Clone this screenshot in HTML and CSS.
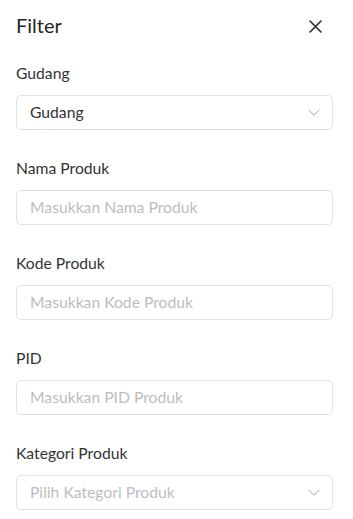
FILE: index.html
```html
<!DOCTYPE html>
<html lang="id">
<head>
<meta charset="utf-8">
<title>Filter</title>
<link rel="stylesheet" href="styles.css">
</head>
<body>
<div class="panel">
  <div class="header">
    <h1 class="title">Filter</h1>
    <button class="close" aria-label="Tutup">
      <svg width="13" height="13" viewBox="0 0 13 13"><path d="M1 1L12 12M12 1L1 12" stroke="#2b2b2b" stroke-width="1.6" stroke-linecap="round" fill="none"/></svg>
    </button>
  </div>
  <div class="fields">
    <div class="field">
      <label class="label">Gudang</label>
      <div class="control select">
        <span class="value">Gudang</span>
        <svg class="chev" width="12" height="7" viewBox="0 0 12 7"><path d="M0.5 0.8L6 6.2L11.5 0.8" stroke="#a6a6a6" stroke-width="1" fill="none"/></svg>
      </div>
    </div>
    <div class="field">
      <label class="label">Nama Produk</label>
      <div class="control"><span class="placeholder">Masukkan Nama Produk</span></div>
    </div>
    <div class="field">
      <label class="label">Kode Produk</label>
      <div class="control"><span class="placeholder">Masukkan Kode Produk</span></div>
    </div>
    <div class="field">
      <label class="label">PID</label>
      <div class="control"><span class="placeholder">Masukkan PID Produk</span></div>
    </div>
    <div class="field">
      <label class="label">Kategori Produk</label>
      <div class="control select">
        <span class="placeholder">Pilih Kategori Produk</span>
        <svg class="chev" width="12" height="7" viewBox="0 0 12 7"><path d="M0.5 0.8L6 6.2L11.5 0.8" stroke="#a6a6a6" stroke-width="1" fill="none"/></svg>
      </div>
    </div>
  </div>
</div>
</body>
</html>
```
FILE: styles.css
```css
* { box-sizing: border-box; }
html, body { margin: 0; background: #fff; }
body {
  font-family: Lato, "Open Sans", sans-serif;
  color: #333;
}
.panel {
  padding: 13px 20px 0 16px;
}
.header {
  display: flex;
  justify-content: space-between;
  align-items: center;
  height: 24px;
  padding-right: 11px;
}
.title {
  margin: 0;
  font-size: 20px;
  line-height: 24px;
  font-weight: 400;
  color: #262626;
}
.close {
  border: 0;
  background: none;
  padding: 0;
  width: 13px;
  height: 13px;
  display: flex;
  margin-top: 3px;
}
.fields {
  display: flex;
  flex-direction: column;
  gap: 28px;
  margin-top: 26px;
}
.field {
  display: flex;
  flex-direction: column;
}
.label {
  font-size: 15.7px;
  line-height: 20px;
  margin-bottom: 12px;
  color: #333;
}
.control {
  width: 317px;
  height: 35px;
  border: 1px solid #e2e2e2;
  border-radius: 5px;
  padding: 0 13px;
  display: flex;
  align-items: center;
  justify-content: space-between;
  font-size: 15.7px;
  line-height: 33px;
}
.value { color: #333; }
.placeholder { color: #bdbdbd; }
.chev { margin-right: -1px; }
```
